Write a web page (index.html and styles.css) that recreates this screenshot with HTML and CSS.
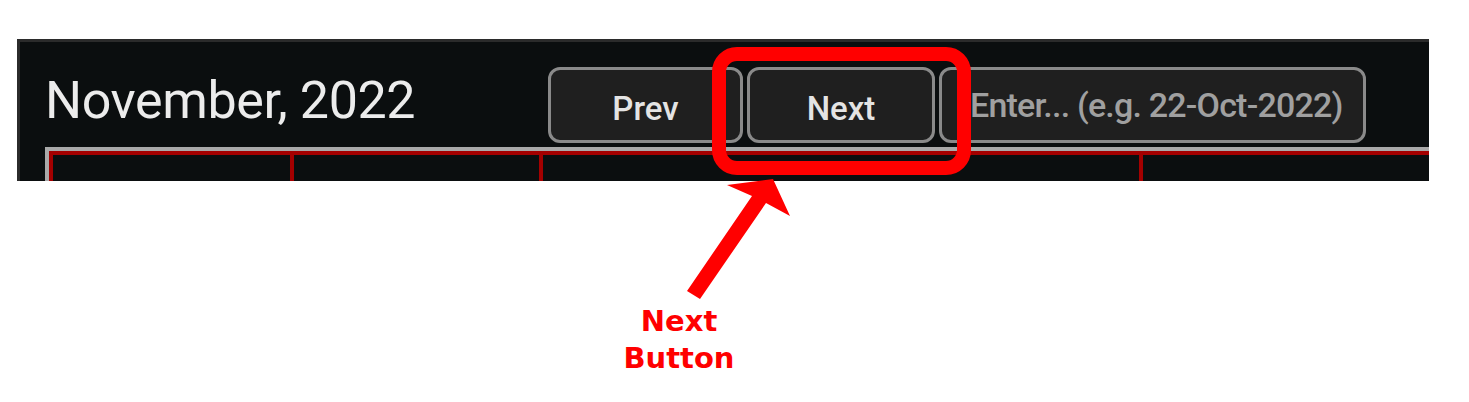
FILE: index.html
```html
<!DOCTYPE html>
<html lang="en">
<head>
  <meta charset="UTF-8" />
  <meta name="viewport" content="width=device-width, initial-scale=1.0"/>
  <title>Calendar - Next button</title>
  <link rel="stylesheet" href="styles.css">
</head>
<body>
  <div class="cal">
    <div class="cal-head">
      <h2 class="cal-title">November, 2022</h2>
      <div class="cal-nav">
        <button class="nav-btn prev">Prev</button>
        <button class="nav-btn next">Next</button>
        <input class="date-input" type="text" placeholder="Enter... (e.g. 22-Oct-2022)">
      </div>
    </div>
    <div class="cal-grid">
      <div class="cell"></div>
      <div class="cell"></div>
      <div class="cell"></div>
      <div class="cell"></div>
      <div class="cell"></div>
    </div>
  </div>

  <!-- callout drawn over the screenshot -->
  <svg class="callout" width="1469" height="402" viewBox="0 0 1469 402">
    <rect x="719" y="54" width="245" height="114" rx="18" ry="18" fill="none" stroke="#ff0000" stroke-width="14"/>
    <polygon points="773,179 727,185 752,196 687,291 700,299 766,203 790,216" fill="#ff0000"/>
  </svg>
  <div class="callout-label">Next<br>Button</div>
</body>
</html>
```

FILE: styles.css
```css
body {
  margin: 0;
  padding: 39px 0 0 17px;
  background: #fff;
  font-family: Roboto, "Liberation Sans", sans-serif;
}
.cal {
  box-sizing: border-box;
  width: 1412px;
  height: 142px;
  overflow: hidden;
  background: #0b0e0f;
  border-top: 3px solid #2b2b2b;
  border-left: 3px solid #2b2b2b;
}
.cal-head {
  display: flex;
  align-items: flex-end;
  height: 101px;
}
.cal-title {
  flex: 0 0 503px;
  align-self: flex-start;
  margin: 33px 0 0 25px;
  font-size: 52px;
  font-weight: 400;
  line-height: 52px;
  color: #ececec;
  letter-spacing: -0.4px;
}
.cal-nav {
  display: flex;
  gap: 4px;
}
.nav-btn, .date-input {
  box-sizing: border-box;
  height: 76px;
  border: 3px solid #8a8a8a;
  border-radius: 12px;
  background: #1f1f1f;
  font-family: Roboto, "Liberation Sans", sans-serif;
  font-weight: 500;
}
.nav-btn {
  font-size: 33px;
  color: #e4e4e4;
  padding: 6px 0 0;
}
.prev { width: 195px; }
.next { width: 188px; }
.date-input {
  width: 427px;
  padding: 0 0 0 28px;
  font-size: 34px;
  color: #a0a0a0;
  outline: none;
}
.date-input::placeholder {
  color: #a0a0a0;
  letter-spacing: -0.8px;
}
.cal-grid {
  display: grid;
  grid-template-columns: 241px 249px 600px 300px 300px;
  margin: 4px 0 0 25px;
  border-top: 4px solid #a9a9a9;
  border-left: 4px solid #a9a9a9;
}
.cell {
  height: 100px;
  border-top: 4px solid #a40000;
  border-left: 4px solid #a40000;
}
.callout {
  position: absolute;
  top: 0;
  left: 0;
}
.callout-label {
  position: absolute;
  left: 579px;
  top: 303px;
  width: 200px;
  text-align: center;
  font-family: "DejaVu Sans", sans-serif;
  font-weight: bold;
  font-size: 29px;
  line-height: 37px;
  color: #ff0000;
}
```
